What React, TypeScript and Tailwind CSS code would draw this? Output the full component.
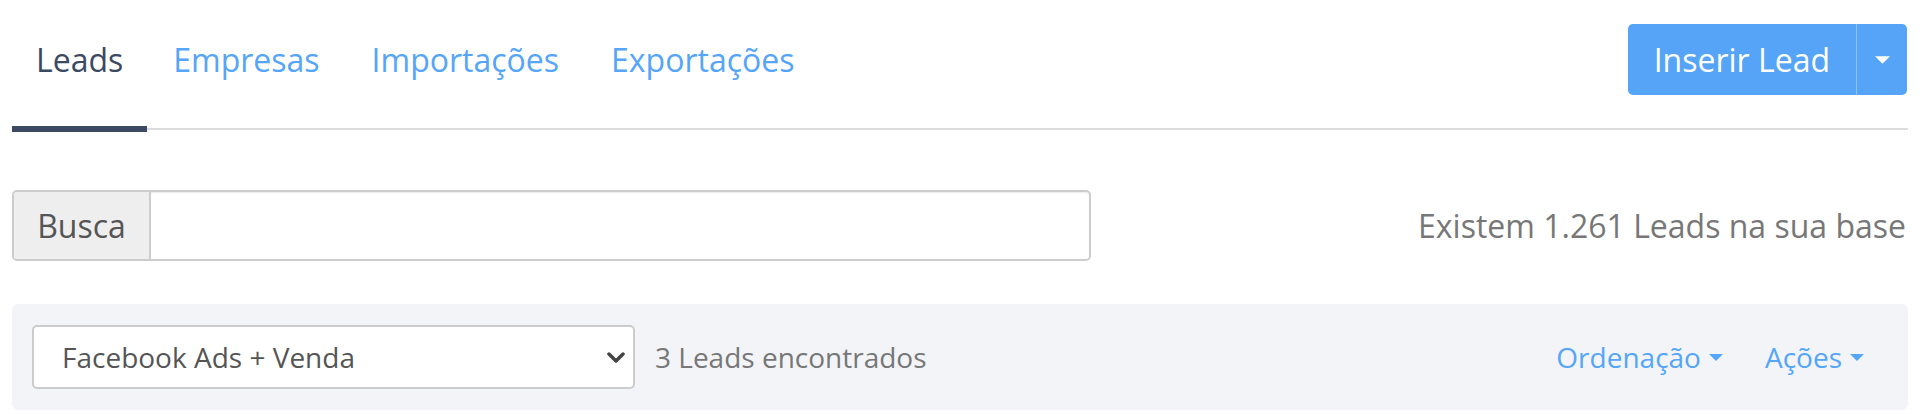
const Caret = ({ className }: { className: string }) => (
  <svg viewBox="0 0 14 7" className={className} aria-hidden="true">
    <path d="M0 0 L14 0 L7 7 Z" fill="currentColor" />
  </svg>
);

const tabs = ['Leads', 'Empresas', 'Importações', 'Exportações'];

export default function App() {
  return (
    <div className="min-h-screen bg-white px-[12px] font-['Open_Sans',sans-serif]">
      {/* cabeçalho com abas */}
      <div className="flex items-start justify-between border-b-2 border-[#dcdcdc]">
        <ul className="flex">
          {tabs.map((t, i) => (
            <li key={t}>
              <a
                href="#"
                className={
                  i === 0
                    ? 'block -mb-[4px] border-b-[6px] border-[#3b4a62] px-[24px] pt-[39px] pb-[45px] text-[32px] leading-[42px] text-[#3b4a62]'
                    : 'block -mb-[4px] border-b-[6px] border-transparent px-[26px] pt-[39px] pb-[45px] text-[32px] leading-[42px] text-[#55a5f9]'
                }
              >
                {t}
              </a>
            </li>
          ))}
        </ul>
        <div className="mt-[24px] mr-[1px] flex h-[71px] overflow-hidden rounded-[5px] bg-[#55a4f8] text-white">
          <button className="px-[26px] text-[32px] leading-[42px]">Inserir Lead</button>
          <div className="w-px bg-[#8fc2fa]" />
          <button className="flex w-[50px] items-center justify-center">
            <Caret className="w-[15px] h-[8px]" />
          </button>
        </div>
      </div>

      {/* busca */}
      <div className="mt-[60px] flex items-center justify-between">
        <div className="flex h-[71px] w-[1079px] rounded-[5px] border-2 border-[#cccccc]">
          <span className="flex w-[137px] items-center justify-center rounded-l-[4px] border-r-2 border-[#cccccc] bg-[#eeeeee] text-[32px] text-[#555555]">
            Busca
          </span>
          <input className="flex-1 rounded-r-[4px] bg-white px-4 text-[28px] shadow-[inset_0_1px_1px_rgba(0,0,0,0.075)] outline-none" />
        </div>
        <p className="mr-[2px] text-[32px] text-[#777777]">Existem 1.261 Leads na sua base</p>
      </div>

      {/* barra de filtros */}
      <div className="mt-[43px] flex items-center justify-between rounded-[6px] bg-[#f3f4f8] py-[21px] pl-[20px] pr-[44px]">
        <div className="flex items-center gap-[20px]">
          <button className="flex h-[64px] w-[603px] items-center justify-between rounded-[5px] border-2 border-[#cccccc] bg-white pl-[28px] pr-[8px] text-[28px] text-[#555555]">
            <span>Facebook Ads + Venda</span>
            <svg viewBox="0 0 18 11" className="w-[18px] h-[11px]" aria-hidden="true">
              <path d="M2 2 L9 9 L16 2" fill="none" stroke="#444" strokeWidth="3.5" strokeLinecap="round" strokeLinejoin="round" />
            </svg>
          </button>
          <span className="text-[28px] text-[#777777]">3 Leads encontrados</span>
        </div>
        <div className="flex items-center gap-[42px] text-[28px] text-[#55a5f9]">
          <a href="#" className="flex items-center gap-[8px]">
            Ordenação
            <Caret className="w-[14px] h-[7px]" />
          </a>
          <a href="#" className="flex items-center gap-[8px]">
            Ações
            <Caret className="w-[14px] h-[7px]" />
          </a>
        </div>
      </div>
    </div>
  );
}
